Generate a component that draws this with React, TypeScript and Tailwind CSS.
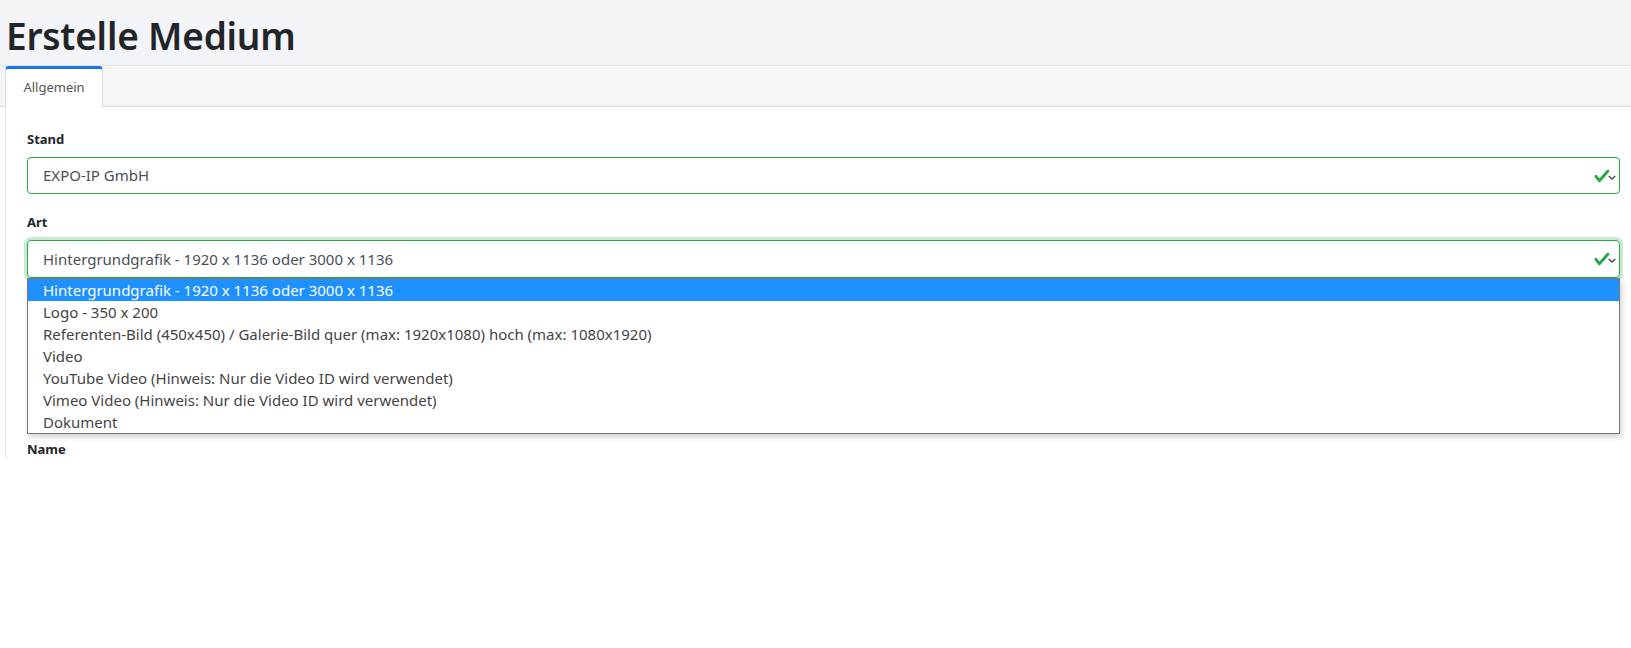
import { useState } from 'react';

const options = [
    'Hintergrundgrafik - 1920 x 1136 oder 3000 x 1136',
    'Logo - 350 x 200',
    'Referenten-Bild (450x450) / Galerie-Bild quer (max: 1920x1080) hoch (max: 1080x1920)',
    'Video',
    'YouTube Video (Hinweis: Nur die Video ID wird verwendet)',
    'Vimeo Video (Hinweis: Nur die Video ID wird verwendet)',
    'Dokument',
];

function ValidIcons() {
    return (
        <div className="absolute right-[3px] top-1/2 -translate-y-1/2 flex items-center">
            <svg viewBox="0 0 8 8" className="w-[18px] h-[17px]">
                <path
                    fill="#28a745"
                    d="M2.3 6.73L.6 4.53c-.4-1.04.46-1.4 1.1-.8l1.1 1.4 3.4-3.8c.6-.63 1.6-.27 1.2.7l-4 4.6c-.43.5-.8.4-1.1.1z"
                />
            </svg>
            <svg viewBox="0 0 10 6" className="w-[8px] h-[6px] -ml-[3px] mt-[3px]">
                <path d="M1 1l4 4 4-4" fill="none" stroke="#4a4a4a" strokeWidth="1.7" />
            </svg>
        </div>
    );
}

export default function App() {
    const [selected, setSelected] = useState(0);

    return (
        <div className="min-h-screen bg-white font-['Noto_Sans','Open_Sans',sans-serif] text-[#212529]">
            {/* Header */}
            <div className="h-[65px] bg-[#f3f4f8] px-[6px] pt-[12px]">
                <h1 className="text-[37px] leading-[48px] font-semibold tracking-[-0.2px] text-[#212529]">Erstelle Medium</h1>
            </div>

            {/* Tabs */}
            <div className="h-[42px] bg-[#f5f5f5] border-t border-[#e4e5e8] border-b border-b-[#dadada] flex items-end pl-[5px]">
                <div className="h-[41px] w-[98px] -mb-px bg-white border-t-[3px] border-t-[#1a73e8] border-x border-x-[#dddddd] rounded-t-[4px] flex items-center justify-center text-[13px] text-[#555]">
                    Allgemein
                </div>
            </div>

            {/* Form */}
            <div className="ml-[5px] h-[352px] border-l border-[#e6e6e6] pl-[21px] pr-[11px] pt-[22px]">
                <label className="block text-[13px] leading-[20px] font-bold text-[#212529]">Stand</label>
                <div className="relative mt-[8px] h-[37px] rounded-[4px] border border-[#28a745] flex items-center pl-[15px] text-[15px] text-[#495057]">
                    EXPO-IP GmbH
                    <ValidIcons />
                </div>

                <label className="block mt-[18px] text-[13px] leading-[20px] font-bold text-[#212529]">Art</label>
                <div className="relative mt-[8px]">
                    <div className="relative h-[38px] rounded-[4px] border border-[#28a745] shadow-[0_0_0_3px_rgba(40,167,69,0.25)] flex items-center pl-[15px] text-[15px] text-[#495057]">
                        {options[selected]}
                        <ValidIcons />
                    </div>
                    <ul className="absolute left-0 right-0 top-full z-10 bg-white border border-[#767676] shadow-[2px_3px_6px_rgba(0,0,0,0.18)] text-[15px] text-[#444]">
                        {options.map((o, i) => (
                            <li
                                key={o}
                                onClick={() => setSelected(i)}
                                className={
                                    i === selected
                                        ? 'h-[22px] leading-[22px] pl-[15px] bg-[#1e90ff] text-white'
                                        : 'h-[22px] leading-[22px] pl-[15px]'
                                }
                            >
                                {o}
                            </li>
                        ))}
                    </ul>
                </div>

                {/* field hidden beneath the open list */}
                <div className="h-[161px]" />

                <label className="block text-[13px] leading-[20px] font-bold text-[#212529]">Name</label>
            </div>
        </div>
    );
}
